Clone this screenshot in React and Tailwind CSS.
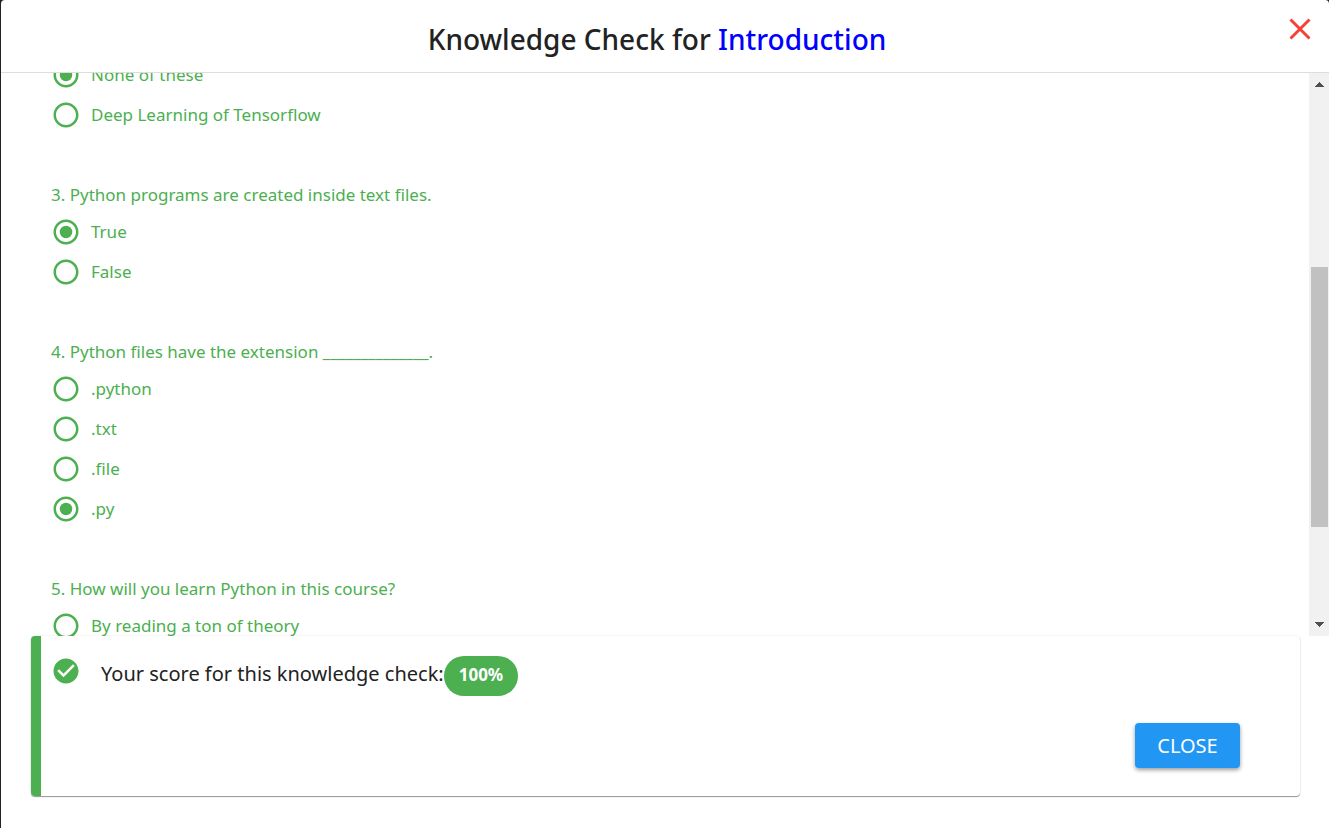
import { useState } from "react";

const QUESTIONS = [
  {
    id: "q2",
    options: ["None of these", "Deep Learning of Tensorflow"],
    answer: "None of these",
  },
  {
    id: "q3",
    title: "3. Python programs are created inside text files.",
    options: ["True", "False"],
    answer: "True",
  },
  {
    id: "q4",
    title: "4. Python files have the extension ______________.",
    options: [".python", ".txt", ".file", ".py"],
    answer: ".py",
  },
  {
    id: "q5",
    title: "5. How will you learn Python in this course?",
    options: ["By reading a ton of theory"],
    answer: "",
  },
];

function Option({ name, text, checked, onChange }) {
  return (
    <label className="flex h-10 w-fit cursor-pointer items-center gap-[10px]">
      <span className="grid size-[30px] shrink-0">
        <input
          type="radio"
          name={name}
          value={text}
          checked={checked}
          onChange={onChange}
          className="col-start-1 row-start-1 size-[30px] appearance-none"
        />
        <svg
          viewBox="0 0 24 24"
          className="pointer-events-none col-start-1 row-start-1 size-[30px] fill-current"
          aria-hidden="true"
        >
          {checked && <circle cx="12" cy="12" r="5" />}
          <path d="M12 2C6.48 2 2 6.48 2 12s4.48 10 10 10 10-4.48 10-10S17.52 2 12 2zm0 18c-4.42 0-8-3.58-8-8s3.58-8 8-8 8 3.58 8 8-3.58 8-8 8z" />
        </svg>
      </span>
      <span>{text}</span>
    </label>
  );
}

function Question({ question }) {
  const [value, setValue] = useState(question.answer);
  return (
    <fieldset>
      {question.title && (
        <legend className="pt-12 pb-[5px] leading-6">{question.title}</legend>
      )}
      {question.options.map((text) => (
        <Option
          key={text}
          name={question.id}
          text={text}
          checked={value === text}
          onChange={() => setValue(text)}
        />
      ))}
    </fieldset>
  );
}

function Scrollbar() {
  return (
    <div className="flex w-5 shrink-0 flex-col items-center bg-[#f1f1f1]" aria-hidden="true">
      <svg viewBox="0 0 20 20" className="size-5 shrink-0 fill-[#505050]">
        <path d="M6 14h9v-1h-1v-1h-1v-1h-1v-1h-1V9h-1v1H9v1H8v1H7v1H6z" />
      </svg>
      <div className="flex w-full flex-1 flex-col pl-[2px] pr-px">
        <div className="grow-[174]" />
        <div className="grow-[260] bg-[#c1c1c1]" />
        <div className="grow-[89]" />
      </div>
      <svg viewBox="0 0 20 20" className="size-5 shrink-0 fill-[#505050]">
        <path d="M6 6h9v1h-1v1h-1v1h-1v1h-1v1h-1v-1H9V9H8V8H7V7H6z" />
      </svg>
    </div>
  );
}

export default function App() {
  return (
    <div className="h-screen bg-[#222]">
      <div className="ml-px flex h-full flex-col overflow-hidden rounded-t bg-white font-['Noto_Sans',sans-serif] text-[#222]">
        <header className="flex h-[73px] shrink-0 items-center border-b border-[#ddd] pr-[14px] pl-7">
          <h1 className="flex-1 pt-1.5 text-center text-[28px] leading-9 font-medium">
            Knowledge Check for <span className="text-[#0000ff]">Introduction</span>
          </h1>
          <button type="button" aria-label="Close dialog" className="-mt-3.5 size-[30px] text-[#f44336]">
            <svg viewBox="0 0 30 30" className="size-[30px] stroke-current" aria-hidden="true">
              <path d="M5.5 5.5l19 19M24.5 5.5l-19 19" fill="none" strokeWidth="3" />
            </svg>
          </button>
        </header>

        <main className="flex min-h-0 flex-1">
          <form className="flex-1 overflow-hidden pl-[50px] text-[17px] text-[#4caf50]">
            <div className="-mt-[18px]">
              {QUESTIONS.map((question) => (
                <Question key={question.id} question={question} />
              ))}
            </div>
          </form>
          <Scrollbar />
        </main>

        <footer className="shrink-0 pr-[29px] pb-8 pl-[30px]">
          <div className="flex h-40 flex-col justify-between rounded border-l-10 border-[#4caf50] pt-5 pr-[60px] pb-7 pl-[10px] shadow-[0_1px_1px_rgba(0,0,0,0.4),0_0_2px_rgba(0,0,0,0.12)]">
            <div className="flex gap-5">
              <svg viewBox="0 0 24 24" className="size-[30px] shrink-0 fill-[#4caf50]" aria-hidden="true">
                <path d="M12 2C6.5 2 2 6.5 2 12s4.500 10 10 10 10-4.500 10-10S17.500 2 12 2zm-2 15l-5-5 1.410-1.410L10 14.170l7.590-7.590L19 8l-9 9z" />
              </svg>
              <p className="flex items-start text-[20px]">
                <span className="leading-9">Your score for this knowledge check:</span>
                <span className="h-10 rounded-full bg-[#4caf50] px-[15px] text-[17px] leading-[38px] font-bold text-white">
                  100%
                </span>
              </p>
            </div>
            <button
              type="button"
              className="h-[45px] w-[105px] self-end rounded bg-[#2196f3] text-[20px] leading-[43px] text-white shadow-[0_2px_4px_rgba(0,0,0,0.4)]"
            >
              CLOSE
            </button>
          </div>
        </footer>
      </div>
    </div>
  );
}
